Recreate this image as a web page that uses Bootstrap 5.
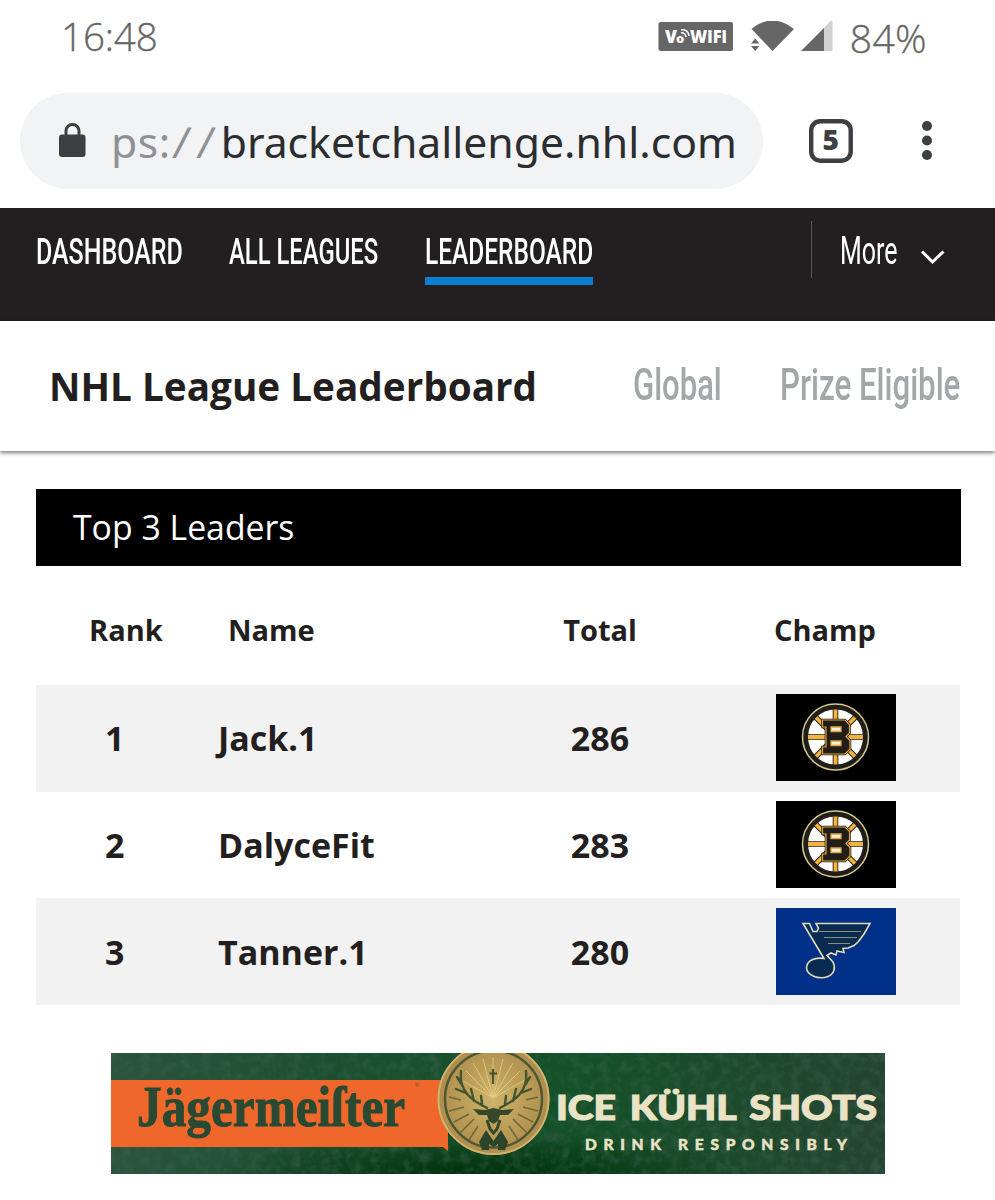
<!DOCTYPE html>
<html lang="en">
<head>
<meta charset="utf-8">
<meta name="viewport" content="width=device-width, initial-scale=1">
<title>NHL Bracket Challenge – Leaderboard</title>
<link href="https://cdn.jsdelivr.net/npm/bootstrap@5.3.0/dist/css/bootstrap.min.css" rel="stylesheet">
<style>
body{font-family:"Open Sans","Noto Sans",sans-serif;color:#231f20;background:#fff;overflow-x:hidden}
svg{display:block;flex:none}
.status-bar{height:93px;padding:0 68px 0 61px;color:#666}
.status-bar .clock{font-size:38.5px;font-weight:350;line-height:73px;letter-spacing:-.1px;-webkit-text-stroke:.35px #666}
.status-bar .battery{font-size:39px;letter-spacing:.4px}
.status-icons{height:74px}
.browser-bar{height:115px;padding-left:20px}
.url-pill{width:743px;height:96px;border-radius:48px;background:#f1f3f4;padding-left:39px}
.url-text{font-family:"Noto Sans",sans-serif;font-size:42.7px;line-height:97px;margin-left:25px;color:#2b2d30;white-space:nowrap}
.url-text .scheme{color:#8f9194;letter-spacing:.5px}
.url-text .slashes{display:inline-block;width:50px;padding-left:3px;letter-spacing:8.500px;transform:skewX(-8deg)}
.cond{font-family:Roboto,sans-serif;display:inline-block;white-space:nowrap;transform-origin:0 50%}
.site-nav{height:113px;background:#231f20;padding:0 0 0 36px}
.site-nav .nav-link{padding:0;height:77px;color:#fff;line-height:85px;font-size:36px;font-weight:500}
.site-nav .nav-link.active{box-shadow:inset 0 -8px #0c7fd2}
.w-dash{width:146px}.w-all{width:149px}.w-lead{width:168px}.w-more{width:58px}.w-glob{width:88px}.w-prize{width:179px}
.s-dash{transform:scaleX(.694)}.s-all{transform:scaleX(.662)}.s-lead{transform:scaleX(.68)}
.s-more{transform:scaleX(.64);font-size:39px;font-weight:400;line-height:87px;color:#fff}
.s-glob{transform:scaleX(.69);font-weight:500}.s-prize{transform:scaleX(.694);font-weight:500}
.more-rule{width:1px;height:57px;background:#5b5758;margin-top:13px}
.title-bar{height:130px;padding:0 0 0 49px;box-shadow:0 2px 4px rgba(0,0,0,.5)}
.title-bar h1{font-size:38.7px;font-weight:700;line-height:130px;width:584px;white-space:nowrap}
.title-bar a{font-size:45px;line-height:124px;color:#a2a7aa;text-decoration:none;display:block}
.leaders{width:925px;margin:38px 0 0 36px}
.leaders-head{height:77px;background:#000;color:#fff;padding-left:37px;font-size:33.8px;line-height:76px}
.leaders-grid{table-layout:fixed;width:924px;line-height:1}
.leaders-grid>:not(caption)>*>*{padding:0;color:#231f20;vertical-align:middle;background:none;box-shadow:none}
.leaders-grid thead th{height:119px;font-size:29px;font-weight:700;padding-top:8px}
.leaders-grid tbody td{height:106.7px;font-size:34px;font-weight:700}
.leaders-grid tbody tr:nth-child(odd){background:#f2f2f2}
.leaders-grid tbody svg{margin-top:-2px}
.leaders-grid tbody tr:last-child svg{margin-top:0}
.leaders-grid thead .c-rank{padding-left:53px}.leaders-grid tbody .c-rank{padding-left:69px}
.leaders-grid thead .c-name{padding-left:10px}
.leaders-grid thead .c-champ{padding-left:56px}.leaders-grid tbody .c-champ{padding-left:58px}
.col-rank{width:182px}.col-name{width:264px}.col-total{width:236px}
.sponsor{margin:48px 0 0 111px;width:774px}
</style>
</head>
<body>
<header>
 <div class="status-bar d-flex justify-content-between">
  <span class="clock">16:48</span>
  <div class="status-icons d-flex align-items-center">
   <svg width="175" height="32" viewBox="657 22 175 32" style="margin-right:17px">
    <rect x="657.5" y="23" width="74.500" height="29" rx="2" fill="#666"/>
    <g fill="#fff" font-family="Open Sans" font-weight="800">
     <text x="664" y="44" font-size="18" textLength="12" lengthAdjust="spacingAndGlyphs">V</text>
     <text x="675" y="44" font-size="13">o</text>
     <text x="689" y="44" font-size="18" textLength="37" lengthAdjust="spacingAndGlyphs">WiFi</text>
    </g>
    <path d="M680 34q4-1 5 4M680 31q7-1 8 6" fill="none" stroke="#fff" stroke-width="1.500"/>
    <path d="M750.500 30Q771 13 793 30L771.500 52Z" fill="#666"/>
    <path d="M750 44.500l4.200-5 4.200 5zM750 47l4.200 5 4.200-5z" fill="#666"/>
    <path d="M831.500 20V52H801Z" fill="#d0d0d0"/>
    <path d="M823 29V52H800Z" fill="#666"/>
   </svg>
   <span class="clock battery">84%</span>
  </div>
 </div>
 <div class="browser-bar d-flex">
  <div class="url-pill d-flex">
   <svg width="27" height="36" viewBox="0 0 27 36" style="margin-top:29px"><path d="M7 14V9a6.500 6.500 0 0 1 13 0v5" fill="none" stroke="#3c4043" stroke-width="3"/><rect y="12.500" width="26.500" height="22.500" rx="3" fill="#3c4043"/></svg>
   <span class="url-text"><span class="scheme">ps:<span class="slashes">//</span></span>bracketchallenge.nhl.com</span>
  </div>
  <svg width="44" height="44" viewBox="0 0 44 44" style="margin:26px 0 0 46px"><rect x="2.200" y="2.200" width="39.500" height="39.500" rx="9" fill="none" stroke="#3c4043" stroke-width="4.400"/><text x="21.700" y="31" text-anchor="middle" font-family="Open Sans" font-size="28" font-weight="800" fill="#3c4043">5</text></svg>
  <svg width="12" height="44" viewBox="0 0 12 44" fill="#3c4043" style="margin:26px 0 0 68px"><circle cx="6" cy="7" r="5"/><circle cx="6" cy="21.500" r="5"/><circle cx="6" cy="36" r="5"/></svg>
 </div>
</header>
<nav class="site-nav d-flex align-items-start">
 <a class="nav-link w-dash" href="#"><span class="cond s-dash">DASHBOARD</span></a>
 <a class="nav-link w-all" href="#" style="margin-left:47px"><span class="cond s-all">ALL LEAGUES</span></a>
 <a class="nav-link w-lead active" href="#" style="margin-left:47px"><span class="cond s-lead">LEADERBOARD</span></a>
 <span class="more-rule" style="margin-left:218px"></span>
 <div class="w-more" style="margin-left:28px"><span class="cond s-more">More</span></div>
 <svg width="26" height="18" viewBox="0 0 26 18" style="margin:40px 0 0 22px"><path d="M2 3.500 12.500 14 23.500 3.500" fill="none" stroke="#fff" stroke-width="3"/></svg>
</nav>
<section class="title-bar d-flex">
 <h1 class="m-0">NHL League Leaderboard</h1>
 <a class="w-glob" href="#"><span class="cond s-glob">Global</span></a>
 <a class="w-prize" href="#" style="margin-left:59px"><span class="cond s-prize">Prize Eligible</span></a>
</section>
<main>
 <section class="leaders">
  <div class="leaders-head">Top 3 Leaders</div>
  <table class="table table-borderless leaders-grid m-0">
   <colgroup><col class="col-rank"><col class="col-name"><col class="col-total"><col></colgroup>
   <thead><tr><th class="c-rank">Rank</th><th class="c-name">Name</th><th class="text-center">Total</th><th class="c-champ">Champ</th></tr></thead>
   <tbody>
    <tr><td class="c-rank">1</td><td>Jack.1</td><td class="text-center">286</td><td class="c-champ">
     <svg width="120" height="87" viewBox="0 0 120 87">
      <defs><g id="bruins">
       <rect width="120" height="87" fill="#000"/>
       <circle cx="59.500" cy="43" r="30" fill="#fff" stroke="#211d18" stroke-width="5"/>
       <circle cx="59.500" cy="43" r="33" fill="none" stroke="#d8c98e" stroke-width="1.500"/>
       <g stroke="#211d18" stroke-width="5.600"><path d="M59.500 15V71M31.500 43H87.500M39.700 23.200 79.300 62.800M79.300 23.200 39.700 62.800"/></g>
       <g stroke="#f4b43b" stroke-width="3.800"><path d="M59.500 15.500V70.500M32 43H87M40 23.500 79 62.500M79 23.500 40 62.500"/></g>
       <path d="M46.500 26H69L73.500 30.500V39L70 42.500 74 46.500V55L69 60H46.500V53H50V33H46.500Z" fill="#211d18" stroke="#211d18" stroke-width="2.600"/>
       <path d="M46.500 26H69L73.500 30.500V39L70 42.500 74 46.500V55L69 60H46.500V53H50V33H46.500Z" fill="#211d18" stroke="#dfa641" stroke-width="1.200"/>
       <path d="M55 33H65V37.500H55ZM55 47H65V51.500H55Z" fill="#f7efd8" stroke="#dfa641" stroke-width="1.300"/>
      </g></defs><use href="#bruins"/></svg></td></tr>
    <tr><td class="c-rank">2</td><td>DalyceFit</td><td class="text-center">283</td><td class="c-champ"><svg width="120" height="87" viewBox="0 0 120 87"><use href="#bruins"/></svg></td></tr>
    <tr><td class="c-rank">3</td><td>Tanner.1</td><td class="text-center">280</td><td class="c-champ">
     <svg width="120" height="87" viewBox="0 0 120 87"><rect width="120" height="87" fill="#003087"/>
      <path d="M27 15.500H33.500L37 23.500H41L42.500 20 40 15.500H94L88 26 85 30 82 34 78 37.500 72 40 67 40.500 68 44.500 61 43 60 47 55 45 51 47.500 57 54C60 60 58 66 52 68.500C42 72 31 67 30.500 60C31 52 39 49 48 50.500Z" fill="#092a51" stroke="#e0dbb8" stroke-width="1.600"/>
      <path d="M43 23.500H85M48 29.500H81M52 35.500H74" stroke="#8d8d72" stroke-width="1.100"/></svg></td></tr>
   </tbody>
  </table>
 </section>
 <aside class="sponsor">
  <svg width="774" height="121" viewBox="0 0 774 121">
   <defs>
    <linearGradient id="green" x1="0" x2="1"><stop offset="0" stop-color="#2c543e"/><stop offset=".3" stop-color="#1b4f30"/><stop offset=".6" stop-color="#135126"/><stop offset="1" stop-color="#264332"/></linearGradient>
    <radialGradient id="dark" cx=".48" cy="1" r=".35"><stop offset="0" stop-color="#003009"/><stop offset="1" stop-color="#003009" stop-opacity="0"/></radialGradient>
    <radialGradient id="gold"><stop offset="0" stop-color="#cdb46b"/><stop offset=".6" stop-color="#bb9c56"/><stop offset="1" stop-color="#ad8c4d"/></radialGradient>
    <filter id="grain" x="0" y="0" width="100%" height="100%"><feTurbulence type="fractalNoise" baseFrequency=".1" numOctaves="4" seed="4"/><feColorMatrix values="0 0 0 0 .04  0 0 0 0 .12  0 0 0 0 .07  2.200 0 0 0 -.9"/></filter>
    <filter id="soft"><feGaussianBlur stdDeviation=".5"/></filter>
    <clipPath id="frame"><rect width="774" height="121"/></clipPath>
   </defs>
   <g clip-path="url(#frame)">
    <rect width="774" height="121" fill="url(#green)"/><rect width="774" height="121" fill="url(#dark)"/>
    <rect width="774" height="121" filter="url(#grain)" opacity=".6"/>
    <path d="M0 27H337V98L332 94H0Z" fill="#ef672b"/>
    <g filter="url(#soft)">
    <text transform="translate(26 73) scale(.85 1)" font-family="Liberation Serif" font-weight="700" font-size="58" fill="#294a33" stroke="#294a33">Jägermeiſter</text>
    <text x="304" y="34" font-family="Liberation Sans" font-size="6" fill="#6b5230">®</text>
    <circle cx="382.500" cy="46" r="56" fill="url(#gold)"/><circle cx="382.500" cy="46" r="55" fill="none" stroke="#d1b36e" stroke-width="2"/>
    <circle cx="382.500" cy="46" r="48.500" fill="none" stroke="#4d5931" stroke-width="2.500"/>
    <g stroke="#6c6b39" stroke-width="1.500"><path d="M350 47 338 44M353 54 338 58M358 61 343 69M363 66 349 80M367 73 358 87M415 47 427 44M412 54 427 58M407 61 422 69M402 66 416 80M398 73 407 87"/></g>
    <g stroke="#ecd58b" stroke-width="1" opacity=".7"><path d="M382 45V4M382 45 372 6M382 45 362 10M382 45 355 18M382 45 350 27M382 45 392 6M382 45 402 10M382 45 409 18M382 45 414 27"/></g>
    <path d="M382 16V31M378.500 20.500H386" stroke="#44522f" stroke-width="2"/>
    <g id="antler" fill="none" stroke="#42552f" stroke-width="2.400" stroke-linecap="round"><path d="M376 55C367 50 347 42 350 18M351 32 346 24M355 40 345 36M363 48 360 36M371 51 370 43"/></g>
    <use href="#antler" transform="matrix(-1 0 0 1 765 0)"/>
    <path d="M362 56 374 57 382.500 55 391 57 403 56 397 62 389 62 387 68 382.500 71 378 68 376 62 368 62Z" fill="#35492b"/>
    <path d="M376 67 379 76 382.500 80 386 76 389 67" fill="none" stroke="#35492b" stroke-width="3"/>
    <path d="M375 77 382.500 88 390 77 397 89 394 97H387V91L382.500 94 378 91V97H371L368 89Z" fill="#2c4529"/>
    </g>
    <g fill="#e9e2c5" font-family="Lato" font-weight="900" stroke="#e9e2c5">
     <text x="445" y="67" font-size="34.500" word-spacing="4" stroke-width="1.200" textLength="321" lengthAdjust="spacingAndGlyphs">ICE KÜHL SHOTS</text>
     <text x="474" y="97" font-size="15.500" stroke-width=".5" textLength="262">DRINK RESPONSIBLY</text>
    </g>
   </g>
  </svg>
 </aside>
</main>
<script src="https://cdn.jsdelivr.net/npm/bootstrap@5.3.0/dist/js/bootstrap.bundle.min.js"></script>
</body>
</html>
